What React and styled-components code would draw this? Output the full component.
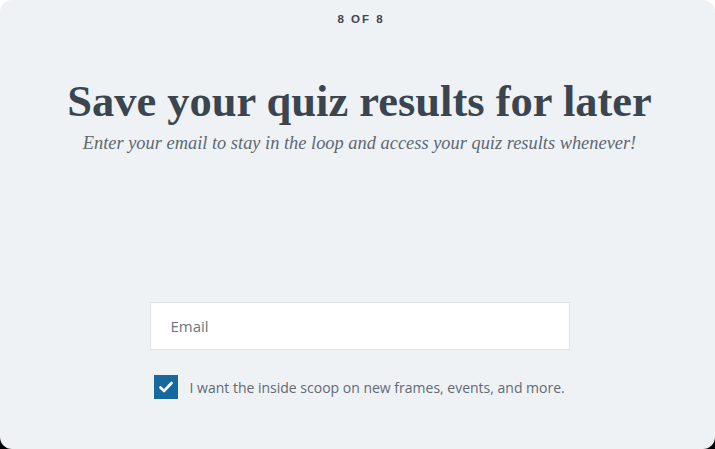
import React from "react";
import styled, { createGlobalStyle } from "styled-components";

const GlobalStyle = createGlobalStyle`
  html, body {
    margin: 0;
    padding: 0;
    background: linear-gradient(to bottom, #ffffff 50%, #000000 50%);
  }
  * { box-sizing: border-box; }
`;

const Card = styled.div`
  width: 715px;
  height: 449px;
  background: #eef2f5;
  border-radius: 12px;
  display: flex;
  flex-direction: column;
  align-items: center;
  overflow: hidden;
`;

const Step = styled.div`
  margin: 13px 0 0 7px;
  font-family: "Liberation Sans", Arial, sans-serif;
  font-weight: 700;
  font-size: 11.5px;
  letter-spacing: 2px;
  color: #3d4650;
`;

const Title = styled.h1`
  margin: 51px 0 0 4px;
  font-family: "Liberation Serif", "Times New Roman", serif;
  font-weight: 700;
  font-size: 44.5px;
  line-height: 50px;
  color: #3b4550;
`;

const Subtitle = styled.p`
  margin: 7px 0 0 4px;
  font-family: "Liberation Serif", "Times New Roman", serif;
  font-style: italic;
  font-size: 18.4px;
  color: #5d6872;
`;

const Form = styled.form`
  margin-top: auto;
  margin-bottom: 50px;
  margin-left: 4px;
  width: 420px;
  display: flex;
  flex-direction: column;
  gap: 25px;
`;

const Input = styled.input`
  width: 100%;
  height: 48px;
  padding: 0 20px;
  background: #ffffff;
  border: 1px solid #dde3e8;
  border-radius: 0;
  font-family: "Open Sans", "Liberation Sans", sans-serif;
  font-size: 15px;
  color: #3b4550;
  outline: none;

  &::placeholder {
    color: #6c7680;
  }
`;

const CheckRow = styled.label`
  display: flex;
  align-items: center;
  gap: 12px;
  padding-left: 4px;
  font-family: "Open Sans", "Liberation Sans", sans-serif;
  font-size: 14px;
  color: #5f6a74;
  cursor: pointer;
`;

const Box = styled.span`
  width: 24px;
  height: 24px;
  flex: none;
  background: #16699f;
  display: flex;
  align-items: center;
  justify-content: center;
`;

export default function App() {
  return (
    <>
      <GlobalStyle />
      <Card>
        <Step>8 OF 8</Step>
        <Title>Save your quiz results for later</Title>
        <Subtitle>
          Enter your email to stay in the loop and access your quiz results whenever!
        </Subtitle>
        <Form onSubmit={(e) => e.preventDefault()}>
          <Input type="email" placeholder="Email" />
          <CheckRow>
            <Box>
              <svg width="14" height="12" viewBox="0 0 14 12">
                <path
                  d="M1.5 6.5 L5 10 L12.5 2"
                  fill="none"
                  stroke="#ffffff"
                  strokeWidth="2.6"
                  strokeLinecap="round"
                  strokeLinejoin="round"
                />
              </svg>
            </Box>
            I want the inside scoop on new frames, events, and more.
          </CheckRow>
        </Form>
      </Card>
    </>
  );
}
